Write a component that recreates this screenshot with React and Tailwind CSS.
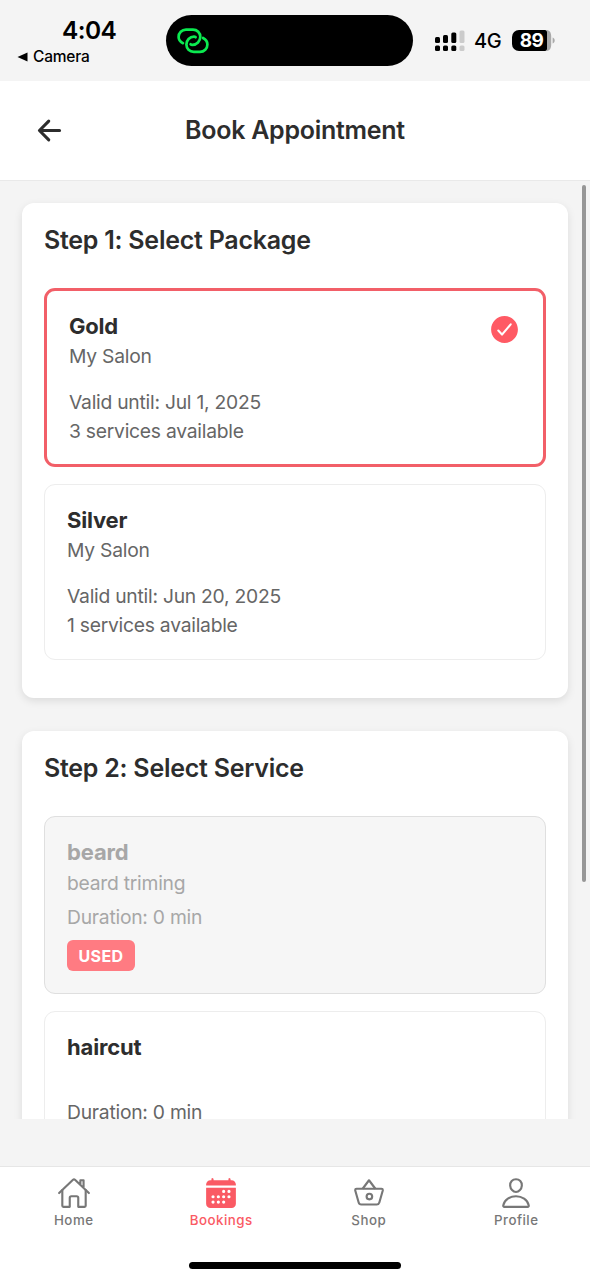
import React, { useState } from 'react';
import {
  IoArrowBack,
  IoBasketOutline,
  IoCalendar,
  IoCheckmarkCircle,
  IoHomeOutline,
  IoPersonOutline,
} from 'react-icons/io5';

const packages = [
  { id: 1, name: 'Gold', salon: 'My Salon', validUntil: 'Jul 1, 2025', services: 3 },
  { id: 2, name: 'Silver', salon: 'My Salon', validUntil: 'Jun 20, 2025', services: 1 },
];

const services = [
  { id: 1, name: 'beard', description: 'beard triming', duration: 0, used: true },
  { id: 2, name: 'haircut', description: '', duration: 0, used: false },
];

const tabs = [
  { label: 'Home', icon: IoHomeOutline },
  { label: 'Bookings', icon: IoCalendar },
  { label: 'Shop', icon: IoBasketOutline },
  { label: 'Profile', icon: IoPersonOutline },
];

const SignalIcon = () => (
  <svg width="30" height="22" viewBox="0 0 30 22">
    <rect x="0" y="7" width="5" height="6" rx="1.5" />
    <rect x="8" y="5" width="5" height="8" rx="1.5" />
    <rect x="16.3" y="2.5" width="5" height="10.5" rx="1.5" />
    <rect x="24.5" y="0.5" width="5" height="12.5" rx="1.5" fill="#cbcbcb" />
    <rect x="0" y="15.5" width="5" height="5.5" rx="1.5" />
    <rect x="8" y="15.5" width="5" height="5.5" rx="1.5" />
    <rect x="16.3" y="15.5" width="5" height="5.5" rx="1.5" />
    <rect x="24.5" y="15.5" width="5" height="5.5" rx="1.5" fill="#cbcbcb" />
  </svg>
);

// Hotspot link rings inside the island
const HotspotIcon = () => (
  <svg width="32" height="26" viewBox="0 0 32 26" fill="none" stroke="#0bea50" strokeWidth="2.7" strokeLinecap="round">
    <path d="M6 15.2C3 13.6 1.6 11.3 1.6 8.9C1.6 4.8 4.8 1.6 9 1.6H16C20.2 1.6 23.3 4.8 23.3 8.8C23.3 13.3 19.8 16.8 15.4 16.8C14.6 16.8 14 16.6 13.6 16.2" />
    <path d="M26 10C29 11.6 30.4 13.9 30.4 16.4C30.4 20.6 27.2 23.8 23 23.8H16.8C12.6 23.8 9.4 20.6 9.4 16.6C9.4 12.1 12.7 8.7 17 8.7C17.7 8.7 18.2 8.9 18.6 9.2" />
  </svg>
);

const StatusBar = () => (
  <div className="h-[81px] shrink-0 flex items-start text-black">
    <div className="w-[166px] pt-[15px]">
      <p className="pl-[62px] text-[24.5px] leading-[30px] font-semibold tracking-[-0.6px]">4:04</p>
      <p className="pl-[17px] mt-0.5 flex items-center gap-[5px] text-[15.5px] leading-5 font-medium tracking-[-0.2px]">
        <svg width="11" height="10" viewBox="0 0 11 10">
          <path d="M10.5 0.5V9.5L0.5 5Z" />
        </svg>
        Camera
      </p>
    </div>
    <div className="mt-[15px] w-[247px] h-[51px] rounded-full bg-black flex items-center pl-[11px]">
      <HotspotIcon />
    </div>
    <div className="pt-[29px] pl-[22px] flex items-center">
      <SignalIcon />
      <span className="ml-[9px] w-[38px] pt-px text-[20px] leading-[22px] font-medium tracking-[-0.3px]">4G</span>
      <span className="w-[35px] h-[21px] rounded-l-[7px] rounded-r-[2px] bg-black text-white text-[19px] leading-[21px] font-bold text-center pl-1 tracking-[-0.5px]">
        89
      </span>
      <svg width="9" height="21" viewBox="0 0 9 21" fill="#a9a9a9">
        <path d="M0 0C3 0.6 4.2 3 4.2 6V15C4.2 18 3 20.4 0 21Z" />
        <path d="M5.6 7.5C8.4 8.3 8.4 12.7 5.6 13.5Z" />
      </svg>
    </div>
  </div>
);

const Header = () => (
  <div className="h-[100px] shrink-0 flex items-center justify-between px-[33px] bg-white border-b border-[#e9e9e9]">
    <button className="w-8">
      <IoArrowBack className="text-[33px] text-[#2d2d2d]" />
    </button>
    <h1 className="pt-px text-[25px] font-semibold tracking-[-0.27px] text-[#2d2d2d]">Book Appointment</h1>
    <div className="w-8" />
  </div>
);

const Section = ({ title, children }) => (
  <div className="bg-white rounded-xl px-[22px] pt-[22px] pb-[38px] shadow-[0_3px_8px_rgba(0,0,0,0.1)]">
    <h2 className="mb-[33px] text-[25px] leading-[30px] font-semibold tracking-[-0.25px] text-[#2d2d2d]">{title}</h2>
    <div className="space-y-[17px]">{children}</div>
  </div>
);

const PackageCard = ({ pkg, selected, onSelect }) => (
  <div
    onClick={onSelect}
    className={`flex justify-between rounded-[11px] px-[22px] text-[19.3px] leading-6 tracking-[-0.25px] text-[#666] ${
      selected ? 'border-3 border-[#f25f68] py-[21px]' : 'border-[1.5px] border-[#ededed] pt-[21px] pb-[22px]'
    }`}
  >
    <div>
      <h3 className="text-[22px] leading-7 font-bold tracking-[-0.2px] text-[#2d2d2d]">{pkg.name}</h3>
      <p className="mt-1">{pkg.salon}</p>
      <p className="mt-[22px]">Valid until: {pkg.validUntil}</p>
      <p className="mt-[5px]">{pkg.services} services available</p>
    </div>
    {selected && <IoCheckmarkCircle className="mt-[1px] text-[33px] text-[#ff5a64]" />}
  </div>
);

const ServiceCard = ({ service }) => (
  <div
    className={`rounded-[11px] border-[1.5px] px-[22px] pt-[21px] pb-[22px] text-[19.3px] leading-6 tracking-[-0.25px] ${
      service.used ? 'bg-[#f6f6f6] border-[#dfdfdf] text-[#a7a7a7]' : 'border-[#ededed] text-[#666]'
    }`}
  >
    <h3
      className={`text-[22px] leading-7 font-bold tracking-[-0.15px] ${
        service.used ? 'text-[#a7a7a7]' : 'text-[#2d2d2d]'
      }`}
    >
      {service.name}
    </h3>
    <p className="mt-[5px] h-6">{service.description}</p>
    <p className="mt-2.5">Duration: {service.duration} min</p>
    {service.used && (
      <span className="mt-[11px] w-[68px] h-[31px] flex items-center justify-center rounded-md bg-[#ff7b82] text-white text-[16px] font-bold tracking-[0.4px]">
        USED
      </span>
    )}
  </div>
);

const TabBar = () => (
  <div className="h-[114px] shrink-0 flex flex-col items-center bg-white border-t border-[#e6e6e6]">
    <div className="w-full flex pt-[9px]">
      {tabs.map(({ label, icon: Icon }) => (
        <div
          key={label}
          className={`flex-1 flex flex-col items-center ${label === 'Bookings' ? 'text-[#fa5a64]' : 'text-[#777]'}`}
        >
          <Icon className="text-[34px]" />
          <span className="mt-0.5 text-[13.3px] leading-4 font-medium tracking-[0.5px]">{label}</span>
        </div>
      ))}
    </div>
    <div className="mt-[34px] w-[212px] h-[7px] rounded-full bg-black" />
  </div>
);

const App = () => {
  const [selectedId, setSelectedId] = useState(1);

  return (
    <div className="w-[590px] h-[1280px] flex flex-col overflow-hidden bg-[#f4f4f4] font-['Inter',sans-serif]">
      <StatusBar />
      <Header />

      {/* Scrollable steps */}
      <div className="h-[938px] shrink-0 flex overflow-hidden">
        <div className="w-[546px] shrink-0 ml-[22px] pt-[22px] space-y-[33px]">
          <Section title="Step 1: Select Package">
            {packages.map((pkg) => (
              <PackageCard
                key={pkg.id}
                pkg={pkg}
                selected={pkg.id === selectedId}
                onSelect={() => setSelectedId(pkg.id)}
              />
            ))}
          </Section>
          <Section title="Step 2: Select Service">
            {services.map((service) => (
              <ServiceCard key={service.id} service={service} />
            ))}
          </Section>
        </div>
        <div className="mt-1 ml-[14px] w-1 h-[697px] rounded-full bg-[#979797]" />
      </div>

      <div className="flex-1" />
      <TabBar />
    </div>
  );
};

export default App;
